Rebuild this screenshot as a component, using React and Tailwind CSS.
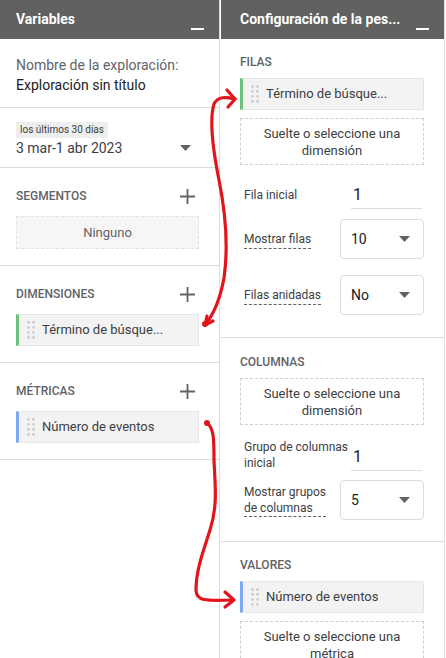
import React from "react";

const font = { fontFamily: "Roboto, 'Liberation Sans', sans-serif" };

function Dash() {
  return <span className="block w-[13px] h-[2px] bg-white mt-[18px]" />;
}

function Plus() {
  return (
    <svg width="15" height="15" viewBox="0 0 15 15" className="mr-[4px]">
      <path d="M7.5 0v15M0 7.5h15" stroke="#5f6368" strokeWidth="1.8" />
    </svg>
  );
}

function Caret() {
  return (
    <svg width="11" height="6" viewBox="0 0 11 6">
      <path d="M0 0h11L5.5 6z" fill="#5f6368" />
    </svg>
  );
}

function Grip() {
  return (
    <svg width="8" height="18" viewBox="0 0 8 18" className="shrink-0">
      {[1.5, 6.5].map((x) =>
        [1.5, 6.5, 11.5, 16.5].map((y) => (
          <circle key={x + "-" + y} cx={x} cy={y} r="1.4" fill="#cfcfcf" />
        ))
      )}
    </svg>
  );
}

function Chip({ color, children }) {
  return (
    <div
      className={`h-[32px] flex items-center gap-[7px] pl-[8px] bg-[#f3f3f3] border border-[#e6e6e6] border-l-[3px] ${color} text-[13px] text-[#3c4043]`}
    >
      <Grip />
      <span>{children}</span>
    </div>
  );
}

function Drop({ children }) {
  return (
    <div className="h-[47px] flex items-center justify-center text-center border border-dashed border-[#cfcfcf] text-[13px] leading-[17px] text-[#3c4043]">
      {children}
    </div>
  );
}

function Label({ children }) {
  return (
    <div className="text-[12px] leading-[20px] font-medium text-[#5f6368] uppercase">
      {children}
    </div>
  );
}

function Select({ value }) {
  return (
    <div className="w-[84px] h-[40px] shrink-0 flex items-center justify-between pl-[10px] pr-[13px] border border-[#dadce0] rounded-[4px] bg-white text-[14px] text-[#202124]">
      <span>{value}</span>
      <Caret />
    </div>
  );
}

function Input({ value }) {
  return (
    <div className="w-[71px] shrink-0 mr-[2px] h-[28px] flex items-center pl-[2px] border-b border-[#dadce0] text-[16px] text-[#202124]">
      {value}
    </div>
  );
}

export default function App() {
  return (
    <div className="relative w-[446px] h-[658px] overflow-hidden bg-white flex" style={font}>
      {/* Left: Variables */}
      <div className="w-[220px] shrink-0 h-full border-r border-[#dadce0]">
        <div className="h-[39px] bg-[#616161] flex justify-between items-center px-[16px] pr-[15px]">
          <span className="text-[14px] font-bold text-white">Variables</span>
          <Dash />
        </div>
        <div className="pt-[16px] pb-[12px] px-[16px] border-b border-[#dadce0] text-[14px] leading-[20px]">
          <div className="text-[#5f6368]">Nombre de la exploración:</div>
          <div className="text-[#202124]">Exploración sin título</div>
        </div>
        <div className="pt-[14px] pb-[9px] pl-[16px] pr-[28px] border-b border-[#dadce0]">
          <div className="w-fit h-[16px] px-[4px] bg-[#eeeeee] text-[10px] leading-[16px] text-[#3c4043]">
            los últimos 30 días
          </div>
          <div className="flex justify-between items-center text-[14px] leading-[20px] text-[#3c4043]">
            <span>3 mar-1 abr 2023</span>
            <Caret />
          </div>
        </div>
        <div className="pt-[18px] pb-[16px] pl-[16px] pr-[20px] border-b border-[#dadce0]">
          <div className="flex justify-between items-center">
            <Label>Segmentos</Label>
            <Plus />
          </div>
          <div className="mt-[10px] h-[33px] flex items-center justify-center bg-[#f6f6f6] border border-dashed border-[#e2e2e2] text-[13px] text-[#5f6368]">
            Ninguno
          </div>
        </div>
        <div className="pt-[18px] pb-[16px] pl-[16px] pr-[20px] border-b border-[#dadce0]">
          <div className="flex justify-between items-center">
            <Label>Dimensiones</Label>
            <Plus />
          </div>
          <div className="mt-[10px]">
            <Chip color="border-l-[#6dbf7b]">Término de búsque...</Chip>
          </div>
        </div>
        <div className="pt-[18px] pb-[16px] pl-[16px] pr-[20px] border-b border-[#dadce0]">
          <div className="flex justify-between items-center">
            <Label>Métricas</Label>
            <Plus />
          </div>
          <div className="mt-[10px]">
            <Chip color="border-l-[#7eaaf0]">Número de eventos</Chip>
          </div>
        </div>
      </div>

      {/* Right: Configuración */}
      <div className="w-[224px] shrink-0 ml-[1px] h-full border-r border-[#dadce0]">
        <div className="h-[39px] bg-[#616161] flex justify-between items-center pl-[19px] pr-[15px]">
          <span className="text-[14px] font-bold text-white whitespace-nowrap">Configuración de la pes...</span>
          <Dash />
        </div>
        <div className="pt-[13px] pb-[22px] pl-[19px] pr-[20px] border-b border-[#dadce0]">
          <Label>Filas</Label>
          <div className="mt-[6px]">
            <Chip color="border-l-[#6dbf7b]">Término de búsque...</Chip>
          </div>
          <div className="mt-[8px]">
            <Drop>
              Suelte o seleccione una
              <br />
              dimensión
            </Drop>
          </div>
          <div className="mt-[16px] flex justify-between items-center pl-[4px]">
            <span className="text-[12px] text-[#3c4043]">Fila inicial</span>
            <Input value="1" />
          </div>
          <div className="mt-[10px] flex justify-between items-center pl-[4px]">
            <span className="text-[12px] leading-[18px] text-[#3c4043] border-b border-dashed border-[#5f6368]">
              Mostrar filas
            </span>
            <Select value="10" />
          </div>
          <div className="mt-[16px] flex justify-between items-center pl-[4px]">
            <span className="text-[12px] leading-[18px] text-[#3c4043] border-b border-dashed border-[#5f6368]">
              Filas anidadas
            </span>
            <Select value="No" />
          </div>
        </div>
        <div className="pt-[14px] pb-[21px] pl-[19px] pr-[20px] border-b border-[#dadce0]">
          <Label>Columnas</Label>
          <div className="mt-[6px]">
            <Drop>
              Suelte o seleccione una
              <br />
              dimensión
            </Drop>
          </div>
          <div className="mt-[14px] flex justify-between items-end pl-[4px]">
            <span className="text-[12px] leading-[16px] text-[#3c4043] whitespace-nowrap">
              Grupo de columnas
              <br />
              inicial
            </span>
            <Input value="1" />
          </div>
          <div className="mt-[9px] flex justify-between items-center pl-[4px]">
            <span className="text-[12px] leading-[16px] text-[#3c4043] border-b border-dashed border-[#5f6368] whitespace-nowrap">
              Mostrar grupos
              <br />
              de columnas
            </span>
            <Select value="5" />
          </div>
        </div>
        <div className="pt-[13px] pl-[19px] pr-[20px]">
          <Label>Valores</Label>
          <div className="mt-[6px]">
            <Chip color="border-l-[#7eaaf0]">Número de eventos</Chip>
          </div>
          <div className="mt-[8px]">
            <Drop>
              Suelte o seleccione una
              <br />
              métrica
            </Drop>
          </div>
        </div>
      </div>

      {/* Red annotation arrows */}
      <svg className="absolute inset-0 pointer-events-none" width="446" height="658" viewBox="0 0 446 658">
        <g fill="none" stroke="#e3141c" strokeWidth="3.2" strokeLinecap="round" strokeLinejoin="round">
          <path d="M235 99 C226 97 218 96 214 104 C209 120 213 150 219 180 C226 215 228 250 224 278 C220 300 214 314 205 325" />
          <path d="M227 90 L235 99 L228 107" />
          <path d="M205 325 L207 316 M205 325 L213 321" />
          <path d="M207 423 C214 428 214 440 214 460 C215 485 218 505 210 530 C203 552 196 570 196 590 C196 601 205 601 233 600" />
          <path d="M225 592 L234 600 L225 607" />
        </g>
        <circle cx="207" cy="423" r="3" fill="#e3141c" />
        <circle cx="205" cy="324" r="3" fill="#e3141c" />
      </svg>
    </div>
  );
}
